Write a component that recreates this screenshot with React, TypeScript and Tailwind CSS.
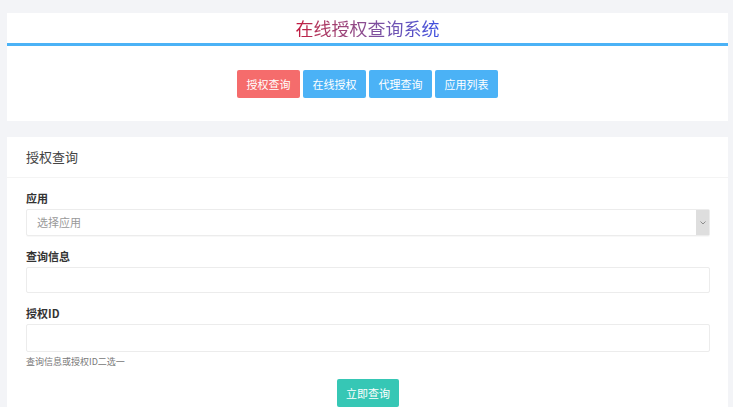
const font = { fontFamily: '"Noto Sans CJK SC", "Noto Sans", sans-serif' };

const navs = [
  { label: "授权查询", active: true },
  { label: "在线授权" },
  { label: "代理查询" },
  { label: "应用列表" },
];

const Field = ({ label, children }: { label: string; children: React.ReactNode }) => (
  <div className="flex flex-col">
    <label className="text-[11px] leading-[18px] font-bold text-[#333] mb-[2px]">{label}</label>
    {children}
  </div>
);

export default function App() {
  return (
    <div className="min-h-screen bg-[#f3f4f7] pt-[13px] pl-[7px] pr-[5px]" style={font}>
      {/* Top card */}
      <div className="bg-white">
        <div className="h-[30px] flex items-center justify-center border-b-[3px] border-[#4bb2f6] box-content">
          <h1 className="text-[18px] leading-none bg-gradient-to-r from-[#c2163e] to-[#3a4fe3] bg-clip-text text-transparent">
            在线授权查询系统
          </h1>
        </div>
        <div className="flex justify-center gap-[3px] pt-[24px] pb-[23px]">
          {navs.map((n) => (
            <button
              key={n.label}
              className={`h-[28px] w-[63px] text-[11px] text-white rounded-[2px] ${
                n.active ? "bg-[#f56c6c]" : "bg-[#4bb2f6]"
              }`}
            >
              {n.label}
            </button>
          ))}
        </div>
      </div>

      {/* Query card */}
      <div className="bg-white mt-[16px]">
        <div className="h-[41px] flex items-center px-[19px] border-b border-[#f4f4f4] text-[13px] text-[#444]">
          授权查询
        </div>
        <div className="pt-[11px] pl-[19px] pr-[18px] flex flex-col gap-[11px]">
          <Field label="应用">
            <div className="h-[27px] flex border border-[#ececec] rounded-[2px] shadow-[0_1px_1px_rgba(0,0,0,0.03)]">
              <span className="flex-1 flex items-center pl-[10px] text-[11px] text-[#999]">选择应用</span>
              <span className="w-[13px] bg-[#dedede] flex items-center justify-center">
                <svg width="6" height="4" viewBox="0 0 6 4">
                  <path d="M0.5 0.5 L3 3 L5.5 0.5" fill="none" stroke="#777" strokeWidth="0.8" />
                </svg>
              </span>
            </div>
          </Field>
          <Field label="查询信息">
            <input className="h-[26px] border border-[#ececec] rounded-[2px] outline-none" />
          </Field>
          <div className="flex flex-col">
            <Field label="授权ID">
              <input className="h-[28px] border border-[#ececec] rounded-[2px] outline-none" />
            </Field>
            <span className="text-[9px] leading-[16px] mt-[2px] text-[#777]">查询信息或授权ID二选一</span>
          </div>
          <div className="flex justify-center -mt-[2px]">
            <button className="h-[28px] w-[62px] bg-[#36c7b5] text-white text-[11px] rounded-[2px]">
              立即查询
            </button>
          </div>
        </div>
      </div>
    </div>
  );
}
